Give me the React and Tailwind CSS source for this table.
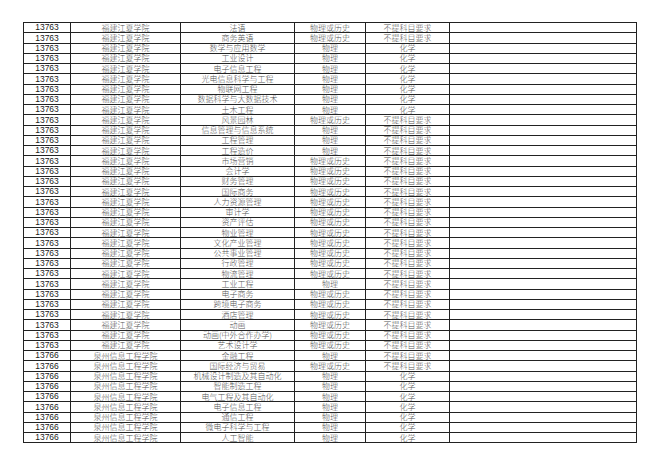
const JX = '福建江夏学院';
const QZ = '泉州信息工程学院';
const WH = '物理或历史';
const WL = '物理';
const NONE = '不提科目要求';
const HX = '化学';

const rows = [
  ['13763', JX, '法语', WH, NONE],
  ['13763', JX, '商务英语', WH, NONE],
  ['13763', JX, '数学与应用数学', WL, HX],
  ['13763', JX, '工业设计', WL, HX],
  ['13763', JX, '电子信息工程', WL, HX],
  ['13763', JX, '光电信息科学与工程', WL, HX],
  ['13763', JX, '物联网工程', WL, HX],
  ['13763', JX, '数据科学与大数据技术', WL, HX],
  ['13763', JX, '土木工程', WL, HX],
  ['13763', JX, '风景园林', WH, NONE],
  ['13763', JX, '信息管理与信息系统', WL, NONE],
  ['13763', JX, '工程管理', WL, NONE],
  ['13763', JX, '工程造价', WL, NONE],
  ['13763', JX, '市场营销', WH, NONE],
  ['13763', JX, '会计学', WH, NONE],
  ['13763', JX, '财务管理', WH, NONE],
  ['13763', JX, '国际商务', WH, NONE],
  ['13763', JX, '人力资源管理', WH, NONE],
  ['13763', JX, '审计学', WH, NONE],
  ['13763', JX, '资产评估', WH, NONE],
  ['13763', JX, '物业管理', WH, NONE],
  ['13763', JX, '文化产业管理', WH, NONE],
  ['13763', JX, '公共事业管理', WH, NONE],
  ['13763', JX, '行政管理', WH, NONE],
  ['13763', JX, '物流管理', WH, NONE],
  ['13763', JX, '工业工程', WL, NONE],
  ['13763', JX, '电子商务', WH, NONE],
  ['13763', JX, '跨境电子商务', WH, NONE],
  ['13763', JX, '酒店管理', WH, NONE],
  ['13763', JX, '动画', WH, NONE],
  ['13763', JX, '动画(中外合作办学)', WH, NONE],
  ['13763', JX, '艺术设计学', WH, NONE],
  ['13766', QZ, '金融工程', WL, NONE],
  ['13766', QZ, '国际经济与贸易', WH, NONE],
  ['13766', QZ, '机械设计制造及其自动化', WL, HX],
  ['13766', QZ, '智能制造工程', WL, HX],
  ['13766', QZ, '电气工程及其自动化', WL, HX],
  ['13766', QZ, '电子信息工程', WL, HX],
  ['13766', QZ, '通信工程', WL, HX],
  ['13766', QZ, '微电子科学与工程', WL, HX],
  ['13766', QZ, '人工智能', WL, HX],
];

const cjk = "font-['Noto_Sans_CJK_SC',sans-serif] font-light text-[8px] text-[#555] leading-none";

function App() {
  return (
    <div className="min-h-[466px] w-[660px] bg-white pl-[23px] pt-[22px]">
      <div className="flex h-[421px] w-[614px] flex-col border-l border-t border-[#222]">
        {rows.map((r, i) => (
          <div key={i} className="grid flex-1 grid-cols-[47px_110px_114px_71px_84px_187px]">
            <div className="flex items-center justify-center border-b border-r border-[#222] font-['Liberation_Sans',sans-serif] text-[8.5px] leading-none text-[#1a1a1a]">
              {r[0]}
            </div>
            <div className={`flex items-center justify-center border-b border-r border-[#222] ${cjk}`}>{r[1]}</div>
            <div className={`flex items-center justify-center border-b border-r border-[#222] ${cjk}`}>{r[2]}</div>
            <div className={`flex items-center justify-center border-b border-r border-[#222] ${cjk}`}>{r[3]}</div>
            <div className={`flex items-center justify-center border-b border-r border-[#222] ${cjk}`}>{r[4]}</div>
            <div className="border-b border-r border-[#222]" />
          </div>
        ))}
      </div>
    </div>
  );
}

export default App;
